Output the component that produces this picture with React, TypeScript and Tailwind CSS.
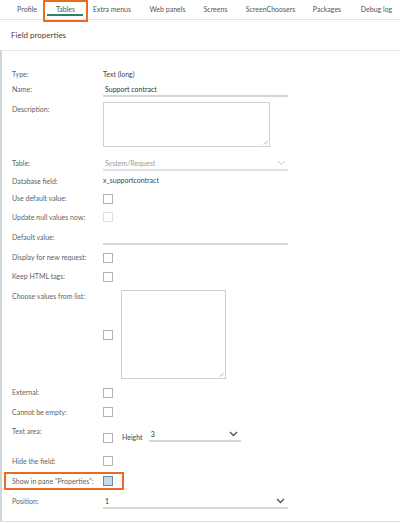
import React from 'react';

const font = { fontFamily: 'Lato, "Open Sans", Arial, sans-serif' };

// tab label + cell width, so each label sits centred in its slot
const tabs: [string, number][] = [
    ['Profile', 38],
    ['Tables', 39],
    ['Extra menus', 54],
    ['Web panels', 57],
    ['Screens', 39],
    ['ScreenChoosers', 71],
    ['Packages', 42],
    ['Debug log', 57],
];

function Check({ disabled, active }: { disabled?: boolean; active?: boolean }) {
    if (active) {
        return <div className="w-[10px] h-[10px] border-[1.5px] border-[#6f8796] bg-[#c6dbe8]" />;
    }
    return (
        <div
            className={`w-[10px] h-[10px] border bg-white ${disabled ? 'border-[#e2e2e2]' : 'border-[#b4b4b4]'}`}
        />
    );
}

function Chevron({ light }: { light?: boolean }) {
    return (
        <svg width="9" height="6" viewBox="0 0 9 6" className="shrink-0">
            <path
                d="M1 1l3.5 3.5L8 1"
                fill="none"
                stroke={light ? '#c4c4c4' : '#555'}
                strokeWidth={light ? 1 : 1.4}
            />
        </svg>
    );
}

function Grip() {
    return (
        <svg width="5" height="5" viewBox="0 0 5 5" className="absolute right-[1px] bottom-[1px]">
            <path d="M4.5 0.5L0.5 4.5M4.5 2.5L2.5 4.5" stroke="#aaa" strokeWidth="0.7" />
        </svg>
    );
}

function Row({ label, h, children, top }: { label: string; h: number; children?: React.ReactNode; top?: number }) {
    return (
        <div className="flex" style={{ height: h }}>
            <div
                className={`w-[91px] shrink-0 whitespace-nowrap text-[7px] text-[#5f5f5f] ${top === undefined ? 'flex items-center' : ''}`}
                style={top === undefined ? undefined : { paddingTop: top }}
            >
                {label}
            </div>
            <div className="flex-1 flex items-center">{children}</div>
        </div>
    );
}

export default function App() {
    return (
        <div className="w-[400px] h-[523px] bg-white overflow-hidden" style={font}>
            {/* Tabs */}
            <div className="flex h-[20px] border-b border-[#e4e4e4] pl-[8px] text-[7px] text-[#555] whitespace-nowrap">
                {tabs.map(([t, w]) => (
                    <div key={t} className="relative flex items-center justify-center h-[20px] pb-[1px] shrink-0" style={{ width: w }}>
                        {t}
                        {t === 'Tables' && (
                            <>
                                <div className="absolute left-[1px] right-[2px] top-[14px] h-[1.5px] bg-[#2f7d6d]" />
                                <div className="absolute left-[-3px] right-[-3px] top-[0px] h-[22px] border-2 border-[#ec6b24]" />
                            </>
                        )}
                    </div>
                ))}
            </div>

            {/* Header */}
            <div className="h-[30px] flex items-center pl-[11px] text-[8px] text-[#444]">Field properties</div>

            {/* Form panel */}
            <div className="h-[472px] border-t border-[#e6e6e6] border-l-2 border-l-[#cfd6d6] border-b border-b-[#e0e0e0] pl-[10px] pt-[16px]">
                <Row label="Type:" h={15}>
                    <span className="text-[7px] text-[#444] -mt-[1px]">Text (long)</span>
                </Row>
                <Row label="Name:" h={15}>
                    <div className="w-[185px] h-[13px] border-b-2 border-[#d6d6d6] text-[7px] text-[#333] pl-[2px] flex items-center mt-[1px]">
                        Support contract
                    </div>
                </Row>
                <Row label="Description:" h={57} top={7}>
                    <div className="relative w-[167px] h-[45px] border border-[#cfcfcf] self-start mt-[5px]">
                        <Grip />
                    </div>
                </Row>
                <Row label="Table:" h={18}>
                    <div className="w-[185px] h-[13px] border-b-2 border-[#e0e0e0] text-[7px] text-[#999] pl-[2px] pr-[2px] flex items-center justify-between mt-[2px]">
                        System/Request
                        <Chevron light />
                    </div>
                </Row>
                <Row label="Database field:" h={18}>
                    <span className="text-[7px] text-[#444] -mt-[1px]">x_supportcontract</span>
                </Row>
                <Row label="Use default value:" h={17}>
                    <Check />
                </Row>
                <Row label="Update null values now:" h={20}>
                    <Check disabled />
                </Row>
                <Row label="Default value:" h={21}>
                    <div className="w-[185px] h-[12px] border-b-2 border-[#d6d6d6] mt-[3px]" />
                </Row>
                <Row label="Display for new request:" h={19}>
                    <Check />
                </Row>
                <Row label="Keep HTML tags:" h={19}>
                    <Check />
                </Row>
                <Row label="Choose values from list:" h={97} top={5}>
                    <Check />
                    <div className="relative ml-[8px] w-[105px] h-[89px] border border-[#cfcfcf] self-start mt-[4px]">
                        <Grip />
                    </div>
                </Row>
                <Row label="External:" h={19}>
                    <Check />
                </Row>
                <Row label="Cannot be empty:" h={20}>
                    <Check />
                </Row>
                <Row label="Text area:" h={29} top={4}>
                    <div className="flex items-center mt-[2px]">
                        <Check />
                        <span className="ml-[9px] text-[7px] text-[#444]">Height</span>
                        <div className="ml-[6px] w-[92px] h-[13px] border-b-2 border-[#d6d6d6] -mt-[5px] pl-[2px] pr-[3px] flex items-center justify-between text-[7px] text-[#333]">
                            3
                            <Chevron />
                        </div>
                    </div>
                </Row>
                <Row label="Hide the field:" h={20}>
                    <Check />
                </Row>
                <div className="relative">
                    <Row label={'Show in pane "Properties":'} h={20}>
                        <Check active />
                    </Row>
                    <div className="absolute left-[-8px] top-[1px] w-[120px] h-[18px] border-2 border-[#ec6b24]" />
                </div>
                <Row label="Position:" h={20}>
                    <div className="w-[185px] h-[13px] border-b-2 border-[#d6d6d6] mt-[2px] pl-[2px] pr-[3px] flex items-center justify-between text-[7px] text-[#333]">
                        1
                        <Chevron />
                    </div>
                </Row>
            </div>
        </div>
    );
}
